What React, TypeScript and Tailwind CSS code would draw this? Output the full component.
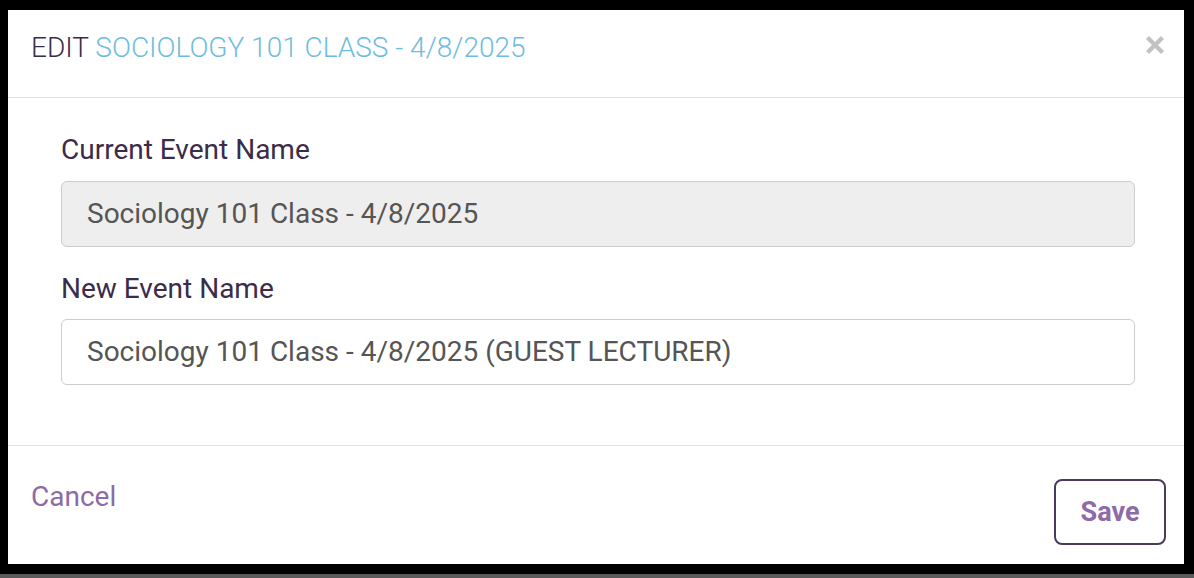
import React from "react";

export default function App() {
  return (
    <div className="w-[1194px] h-[578px] bg-black flex flex-col overflow-hidden" style={{ fontFamily: "Roboto, 'Liberation Sans', sans-serif" }}>
      <div className="pt-[10px] pl-[8px]">
        <div className="w-[1176px] h-[554px] bg-white flex flex-col">
          <div className="h-[88px] border-b border-[#e3e3e3] flex items-start justify-between pl-[23px] pr-[19px] pt-[24px]">
            <h1 className="text-[28px] leading-none font-light">
              <span className="text-[#3b2c48]">EDIT </span>
              <span className="text-[#6ebde0]">SOCIOLOGY 101 CLASS - 4/8/2025</span>
            </h1>
            <button className="w-[20px] h-[20px] mt-[1px] text-[#c2c2c2]" aria-label="close">
              <svg viewBox="0 0 20 20" width="20" height="20">
                <path d="M2.5 2.5 L17.5 17.5 M17.5 2.5 L2.5 17.5" stroke="currentColor" strokeWidth="4.4" strokeLinecap="butt" />
              </svg>
            </button>
          </div>
          <div className="h-[348px] border-b border-[#e3e3e3] pl-[53px] pr-[49px] pt-[38px] flex flex-col">
            <label className="text-[28px] leading-none text-[#3b2c48]">Current Event Name</label>
            <div className="mt-[17px] h-[66px] rounded-[6px] border border-[#cccccc] bg-[#eeeeee] flex items-center pl-[25px] text-[28px] text-[#555555]">
              Sociology 101 Class - 4/8/2025
            </div>
            <label className="mt-[28px] text-[28px] leading-none text-[#3b2c48]">New Event Name</label>
            <div className="mt-[16px] h-[66px] rounded-[6px] border border-[#cccccc] bg-white flex items-center pl-[25px] text-[28px] text-[#555555]">
              Sociology 101 Class - 4/8/2025 (GUEST LECTURER)
            </div>
          </div>
          <div className="flex-1 flex items-start justify-between pl-[23px] pr-[18px] pt-[33px]">
            <button className="mt-[4px] text-[28px] leading-none text-[#8d6ba8]">Cancel</button>
            <button className="w-[112px] h-[66px] rounded-[8px] border-2 border-[#4a3b5c] text-[27px] font-bold text-[#8d6ba8] flex items-center justify-center">
              Save
            </button>
          </div>
        </div>
      </div>
      <div className="mt-[10px] h-[4px] bg-[#5a5a5a]" />
    </div>
  );
}
